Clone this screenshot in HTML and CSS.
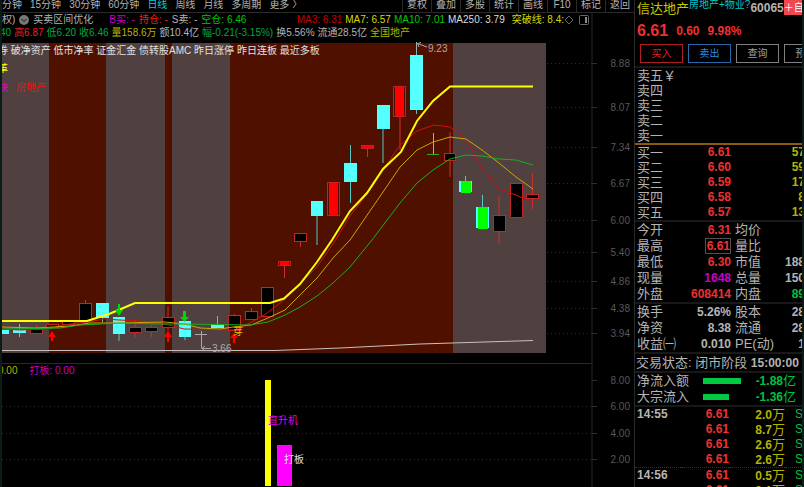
FILE: index.html
```html
<!DOCTYPE html>
<html lang="zh-CN">
  <head>
    <meta charset="UTF-8" />
    <meta name="viewport" content="width=device-width, initial-scale=1.0" />
    <title>信达地产 日线</title>
    <link rel="stylesheet" href="styles.css">
  </head>
  <body>
    <main class="charts">
      <nav class="toolbar">
        <div class="periods">
          <button>分钟</button>
          <button>15分钟</button>
          <button>30分钟</button>
          <button>60分钟</button>
          <button class="active">日线</button>
          <button>周线</button>
          <button>月线</button>
          <button>多周期</button>
          <button>更多 〉</button>
        </div>
        <div class="tools">
          <button>复权</button>
          <button>叠加</button>
          <button>多股</button>
          <button>统计</button>
          <button>画线</button>
          <button>F10</button>
          <button>标记</button>
          <button>返回</button>
        </div>
      </nav>

      <header class="info">
        <div class="line">
          <span>权)</span>
          <svg class="icon" viewBox="0 0 10 10">
            <circle cx="5" cy="5" r="5" fill="#777" />
            <path d="M2.5 4 L5 6.5 L7.5 4" fill="none" stroke="#111" />
          </svg>
          <span class="title">买卖区间优化</span>
          <span class="magenta">B买: -</span>
          <span class="red">持仓: -</span>
          <span>S卖: -</span>
          <span class="lime">空仓: 6.46</span>
          <div class="averages">
            <span class="darkred">MA3: 6.31</span>
            <span class="yellow">MA7: 6.57</span>
            <span class="lime">MA10: 7.01</span>
            <span class="white">MA250: 3.79</span>
            <span class="yellow last">突破线: 8.4:</span>
          </div>
          <svg class="icon" viewBox="0 0 10 10">
            <path d="M5 1 L9 5 L5 9 L1 5 Z" fill="none" stroke="#666" />
          </svg>
          <svg class="icon" viewBox="0 0 10 10">
            <rect x="0.5" y="0.5" width="9" height="9" rx="1" fill="none" stroke="#666" />
            <rect x="6" y="2" width="2" height="6" fill="#888" />
          </svg>
        </div>
        <div class="line quote">
          <span class="green">40</span>
          <span class="red">高6.87</span>
          <span class="green">低6.20</span>
          <span class="green">收6.46</span>
          <span class="gold">量158.6万</span>
          <span>额10.4亿</span>
          <span class="green">幅-0.21(-3.15%)</span>
          <span>换5.56%</span>
          <span>流通28.5亿</span>
          <span class="gold">全国地产</span>
        </div>
      </header>

      <!-- Daily candles -->
      <svg class="chart" viewBox="2 40 632 323">
        <g class="zone-gray">
          <rect x="2" y="43" width="544" height="310" />
        </g>
        <g class="zone-brown">
          <rect x="49" y="43" width="57" height="310" />
          <rect x="165" y="43" width="7" height="310" />
          <rect x="230" y="43" width="223" height="310" />
        </g>

        <!-- Price axis -->
        <path class="axis" d="M592 40 V363" />
        <path class="grid" d="M547 63.5 H592 M547 107.5 H592 M547 147.5 H592 M547 183.5 H592 M547 220.5 H592 M547 252.5 H592 M547 281.5 H592 M547 308.5 H592 M547 333.5 H592" />
        <path class="tick" d="M592 63.5 H597 M592 107.5 H597 M592 147.5 H597 M592 183.5 H597 M592 220.5 H597 M592 252.5 H597 M592 281.5 H597 M592 308.5 H597 M592 333.5 H597" />
        <g class="scale">
          <text x="630" y="67">8.88</text>
          <text x="630" y="111">8.07</text>
          <text x="630" y="151">7.34</text>
          <text x="630" y="187">6.67</text>
          <text x="630" y="224">6.00</text>
          <text x="630" y="256">5.40</text>
          <text x="630" y="285">4.86</text>
          <text x="630" y="312">4.38</text>
          <text x="630" y="337">3.94</text>
        </g>

        <!-- Wicks -->
        <path class="wick-up" d="M36.500 325 V330 M85.500 300 V303 M135 320 V338 M151.500 325 V337 M168 306 V331 M234.500 314 V316 M251.500 308 V312 M284.500 266 V278 M300.500 240 V247 M367.500 149 V157 M400 117 V150 M450 132 V177 M499 196 V244 M532.500 173 V209" />
        <path class="wick-down" d="M19.500 324 V337 M102.500 318 V322 M119 317 V341 M185 321 V340 M217.500 316 V325 M317 215 V245 M350.500 145 V203 M383 129 V163 M416.500 42 V114 M482.500 195 V208 M465.500 176 V182" />
        <path class="wick-flat" d="M433.500 133 V154 M195 334.500 H207 M201.500 331 V348 M201.500 348.500 H211 M205 346 L202 348.500 L205 351 M416.500 43 V52 M427 47 L417.500 43.500 M421 42.500 L417.500 43.500 L419 47" />
        <path class="wick-green" d="M427 154.500 H439" />

        <g class="candle-hollow">
          <rect x="30.500" y="329.500" width="12" height="4" />
          <rect x="46.500" y="324.500" width="12" height="3" />
          <rect x="62.500" y="321.500" width="12" height="3" />
          <rect x="79.500" y="303.500" width="12" height="17" />
          <rect x="129.500" y="327.500" width="12" height="5" />
          <rect x="145.500" y="327.500" width="12" height="4" />
          <rect x="162.500" y="317.500" width="12" height="10" />
          <rect x="228.500" y="315.500" width="12" height="15" />
          <rect x="245.500" y="311.500" width="12" height="8" />
          <rect x="261.500" y="287.500" width="12" height="29" />
          <rect x="294.500" y="233.500" width="12" height="8" />
          <rect x="444.500" y="153.500" width="11" height="7" />
          <rect x="493.500" y="215.500" width="12" height="16" />
          <rect x="510.500" y="183.500" width="12" height="34" />
          <rect x="526.500" y="194.500" width="12" height="4" />
        </g>
        <g class="candle-limit">
          <rect x="278.500" y="261.500" width="12" height="4" />
          <rect x="327.500" y="182.500" width="12" height="33" />
          <rect x="361.500" y="145.500" width="12" height="3" />
          <rect x="393.500" y="86.500" width="12" height="30" />
        </g>
        <path class="candle-edge" d="M279.500 262 V265 M289.500 262 V265 M328.500 183 V215 M338.500 183 V215 M394.500 87 V116 M404.500 87 V116" />
        <g class="candle-down">
          <rect x="2" y="330" width="7" height="4" />
          <rect x="13" y="330" width="13" height="3" />
          <rect x="96" y="303" width="13" height="15" />
          <rect x="113" y="317" width="12" height="17" />
          <rect x="179" y="321" width="12" height="16" />
          <rect x="211" y="324" width="13" height="4" />
          <rect x="311" y="201" width="12" height="15" />
          <rect x="344" y="163" width="13" height="19" />
          <rect x="377" y="105" width="13" height="24" />
          <rect x="410" y="55" width="13" height="55" />
          <rect x="459" y="181" width="13" height="11" />
          <rect x="476" y="207" width="13" height="21" />
        </g>
        <g class="candle-sell">
          <rect x="461" y="181" width="10" height="12" />
          <rect x="478" y="207" width="10" height="22" />
        </g>

        <!-- Averages -->
        <polyline class="ma250" points="2,350.500 275,350.500 340,348 420,344 533,340.500" />
        <polyline class="ma3" points="2,329 20,330 50,329 62,325 87,322 105,319 119,320 140,321 165,324 184,329 235,330 250,323 267,313 284,300 300,284 317,267 335,241 350,216 367,194 385,167 400,145 417,131 434,125 450,127 466,139 482,168 499,189 516,195 533,203" />
        <polyline class="ma7" points="2,327 35,328 70,326 90,323 120,323 165,322 184,324 200,328 220,329 233,327 251,325 268,318 285,310 300,295 317,278 333,258 350,240 383,192 400,167 417,150 433,142 450,137 466,139 482,150 499,163 516,177 533,189" />
        <polyline class="ma10" points="2,329 60,328 80,325 100,324 120,323 160,324 184,324 250,325 268,322 285,315 300,307 317,296 333,283 350,267 372,240 400,203 417,183 433,170 450,159 466,155 482,156 499,159 516,160 533,165" />
        <polyline class="breakout" points="2,321 87,321 109,314 135,303 270,303 284,298.500 300,284 317,262 332,240 350,211 367,193 383,169 401,152 417,121 433,101 450,86.500 533,86.500" />

        <g class="arrow-buy">
          <path d="M52 331 L56 337 H53 V341 H51 V337 H48 Z" />
          <path d="M168 331 L172 337 H169 V342 H167 V337 H164 Z" />
          <path d="M234 333 L238 338 H235 V343 H233 V338 H230 Z" />
        </g>
        <g class="arrow-sell">
          <path d="M119 316 L123 310 H120 V304 H118 V310 H115 Z" />
          <path d="M184.500 322 L189 317 H186 V311 H183 V317 H180 Z" />
        </g>

        <g class="note">
          <text class="white" x="-2" y="54">券 破净资产 低市净率 证金汇金 债转股AMC 昨日涨停 昨日连板 最近多板</text>
          <text class="bright" x="-2" y="72">革</text>
          <text class="magenta" x="-2" y="91">块</text>
          <text class="red" x="16" y="91">房地产</text>
          <text class="gold" x="233" y="335">芽</text>
          <text x="212" y="352">3.66</text>
          <text x="428" y="52">9.23</text>
        </g>
      </svg>

      <div class="line sub-legend">
        <span class="gold">0.00</span>
        <span class="magenta">打板: 0.00</span>
      </div>

      <!-- Indicator panel -->
      <svg class="chart" viewBox="2 378 632 109">
        <path class="grid" d="M2 406.500 H592 M2 433.500 H592 M2 459.500 H592" />
        <path class="axis" d="M592 378 V487" />
        <path class="tick" d="M592 380.500 H597 M592 406.500 H597 M592 433.500 H597 M592 459.500 H597" />
        <g class="scale">
          <text x="630" y="384">8.00</text>
          <text x="630" y="410">6.00</text>
          <text x="630" y="437">4.00</text>
          <text x="630" y="463">2.00</text>
        </g>
        <rect class="bar-yellow" x="265" y="380" width="6" height="106" />
        <rect class="bar-magenta" x="277" y="445" width="15" height="41" />
        <g class="note">
          <text class="magenta" x="268" y="424">直升机</text>
          <text class="white" x="284" y="463">打板</text>
        </g>
      </svg>
    </main>

    <aside class="panel">
      <header class="stock">
        <h1>信达地产</h1>
        <a class="sector" href="#">房地产+物业?</a>
        <b>60065</b>
        <button>＋自选</button>
      </header>
      <div class="price">
        <strong>6.61</strong>
        <b>0.60</b>
        <b>9.98%</b>
      </div>
      <div class="actions">
        <button class="buy">买入</button>
        <button class="sell">卖出</button>
        <button>查询</button>
        <button>预警</button>
      </div>

      <table class="book asks">
        <tr><th>卖五￥</th><td></td><td></td></tr>
        <tr><th>卖四</th><td></td><td></td></tr>
        <tr><th>卖三</th><td></td><td></td></tr>
        <tr><th>卖二</th><td></td><td></td></tr>
        <tr><th>卖一</th><td></td><td></td></tr>
      </table>
      <table class="book bids">
        <tr><th>买一</th><td class="up">6.61</td><td class="gold">57</td></tr>
        <tr><th>买二</th><td class="up">6.60</td><td class="gold">59</td></tr>
        <tr><th>买三</th><td class="up">6.59</td><td class="gold">17</td></tr>
        <tr><th>买四</th><td class="up">6.58</td><td class="gold">8</td></tr>
        <tr><th>买五</th><td class="up">6.57</td><td class="gold">13</td></tr>
      </table>

      <table class="stats">
        <tr><th>今开</th><td class="up">6.31</td><th>均价</th><td></td></tr>
        <tr><th>最高</th><td class="up"><span class="boxed">6.61</span></td><th>量比</th><td></td></tr>
        <tr><th>最低</th><td class="up">6.30</td><th>市值</th><td>188</td></tr>
        <tr><th>现量</th><td class="magenta">1648</td><th>总量</th><td>150</td></tr>
        <tr><th>外盘</th><td class="up">608414</td><th>内盘</th><td class="down">89</td></tr>
      </table>
      <table class="stats">
        <tr><th>换手</th><td>5.26%</td><th>股本</th><td>28</td></tr>
        <tr><th>净资</th><td>8.38</td><th>流通</th><td>28</td></tr>
        <tr><th>收益㈠</th><td>0.010</td><th>PE(动)</th><td>1</td></tr>
      </table>

      <p class="status">交易状态: 闭市阶段 <b>15:00:00</b></p>

      <table class="flow">
        <tr><th>净流入额</th><td><div class="flow-bar" style="width: 38px"></div></td><td class="down"><b>-1.88</b>亿</td></tr>
        <tr><th>大宗流入</th><td><div class="flow-bar" style="width: 26px"></div></td><td class="down"><b>-1.36</b>亿</td></tr>
      </table>

      <table class="ticks">
        <tr><th>14:55</th><td class="up">6.61</td><td class="gold"><b>2.0</b>万</td><td class="down">S</td></tr>
        <tr><th></th><td class="up">6.61</td><td class="gold"><b>8.7</b>万</td><td class="down">S</td></tr>
        <tr><th></th><td class="up">6.61</td><td class="gold"><b>2.6</b>万</td><td class="down">S</td></tr>
        <tr><th></th><td class="up">6.61</td><td class="gold"><b>2.6</b>万</td><td class="down">S</td></tr>
        <tr class="minute"><th>14:56</th><td class="up">6.61</td><td class="gold"><b>0.5</b>万</td><td class="down">S</td></tr>
        <tr><th></th><td class="up">6.61</td><td class="gold"><b>2.1</b>万</td><td class="down">S</td></tr>
      </table>
    </aside>
  </body>
</html>
```

FILE: styles.css
```css
* {
  box-sizing: border-box;
}
body {
  margin: 0;
  height: 100vh;
  overflow: hidden;
  display: grid;
  grid-template-columns: minmax(0, 1fr) 168px;
  background-color: #000;
  color: #b4b4b4;
  border-left: 2px solid #0c1c1a;
  border-right: 2px solid #0c1c1a;
  font-family: "Liberation Sans", "Noto Sans CJK SC", sans-serif;
  font-size: 10px;
}
button {
  padding: 0;
  border: none;
  background: none;
  color: inherit;
  font: inherit;
  white-space: nowrap;
  cursor: pointer;
}
.charts {
  min-width: 0;
  overflow: hidden;
}

/* Text colours */
.red {
  color: #ee2020;
  fill: #ee1010;
}
.darkred {
  color: #c80000;
}
.yellow {
  color: #d8d800;
}
.gold {
  color: #b4b400;
  fill: #d0c000;
}
.bright {
  fill: #ffff00;
}
.lime {
  color: #00c800;
}
.green {
  color: #00a840;
}
.magenta {
  color: #c800c8;
  fill: #e000e0;
}
.white {
  color: #dcdcdc;
  fill: #e0e0e0;
}

/* Top bar */
.toolbar {
  display: flex;
  justify-content: space-between;
  height: 13px;
  border-bottom: 1px solid #2a2a2a;
  line-height: 10px;
  overflow: hidden;
}
.periods {
  display: flex;
  align-items: flex-start;
  gap: 8px;
}
.periods .active {
  color: #00d0d8;
}
.tools {
  display: flex;
  width: 232px;
}
.tools button {
  flex: 1;
  border-left: 1px solid #2a2a2a;
  padding-bottom: 2px;
}

/* Quote lines */
.info {
  height: 27px;
  margin-right: 41px;
  border-right: 2px solid #141414;
}
.line {
  display: flex;
  align-items: center;
  gap: 4px;
  height: 14px;
  line-height: 14px;
  white-space: nowrap;
}
.quote {
  gap: 3px;
  height: 12px;
  line-height: 12px;
  margin-left: -2px;
}
.icon {
  flex: none;
  width: 10px;
  height: 10px;
}
.title {
  margin-right: 12px;
}
.averages {
  display: flex;
  gap: 3px;
  flex: 1;
  justify-content: flex-end;
  margin-right: -4px;
}
.last {
  margin-left: 4px;
}
.info .icon:last-child {
  margin: 0 2px 0 1px;
}

/* Charts */
.chart {
  display: block;
  width: 100%;
  height: auto;
  overflow: visible;
}
.zone-gray {
  fill: #504040;
}
.zone-brown {
  fill: #501000;
}
.axis {
  stroke: #141414;
  stroke-width: 2;
}
.grid {
  stroke: #2c2c2c;
  stroke-dasharray: 1 3;
}
.tick {
  stroke: #303030;
}
.scale {
  fill: #585858;
  text-anchor: end;
}
.note {
  fill: #b0a8a8;
}
.wick-up,
.wick-down,
.wick-flat,
.wick-green {
  fill: none;
}
.wick-up {
  stroke: #c83030;
}
.wick-down {
  stroke: #50c8c8;
}
.wick-flat {
  stroke: #b0a8a8;
}
.wick-green {
  stroke: #30b010;
}
.candle-hollow {
  fill: #000;
  stroke: #c02828;
}
.candle-limit {
  fill: #ff0000;
  stroke: #c82020;
}
.candle-edge {
  stroke: #500808;
}
.candle-down {
  fill: #54ffff;
}
.candle-sell {
  fill: #00ff00;
}
polyline {
  fill: none;
}
.ma250 {
  stroke: #c8c0c0;
}
.ma3 {
  stroke: #d01010;
}
.ma7 {
  stroke: #c8a800;
}
.ma10 {
  stroke: #18b018;
}
.breakout {
  stroke: #ffff00;
  stroke-width: 2;
}
.arrow-buy {
  fill: #ff0000;
}
.arrow-sell {
  fill: #00d800;
}
.sub-legend {
  height: 15px;
  margin-right: 41px;
  border-top: 1px solid #2a2a2a;
  border-right: 2px solid #141414;
  gap: 12px;
  margin-left: -4px;
}
.bar-yellow {
  fill: #ffff00;
}
.bar-magenta {
  fill: #ff00ff;
}

/* Quote panel */
.panel {
  min-width: 0;
  overflow: hidden;
  border-left: 1px solid #2a2a2a;
  font-size: 13px;
}
.stock {
  display: flex;
  align-items: flex-start;
  height: 20px;
  padding-left: 2px;
  line-height: 17px;
  white-space: nowrap;
}
.stock > * {
  flex: none;
}
.stock h1 {
  margin: 0;
  color: #c8c800;
  font-size: 13px;
  font-weight: normal;
}
.sector {
  color: #00c8c8;
  font-size: 10px;
  line-height: 10px;
  text-decoration: none;
}
.stock b {
  font-size: 12px;
}
.stock button {
  height: 15px;
  background-color: #f04850;
  color: #fff;
  font-size: 10px;
  line-height: 15px;
}
.price {
  display: flex;
  align-items: center;
  gap: 8px;
  height: 22px;
  padding-left: 2px;
  color: #f03030;
  font-size: 12px;
}
.price strong {
  font-size: 16px;
}
.actions {
  display: flex;
  gap: 5px;
  height: 26px;
  padding: 2px 0 0 5px;
  border-bottom: 2px solid #181818;
}
.actions button {
  flex: none;
  width: 43px;
  height: 19px;
  border: 1px solid #808080;
  color: #a0a0a0;
  font-size: 10px;
  line-height: 16px;
}
.actions .buy {
  border-color: #b02020;
  color: #e02020;
}
.actions .sell {
  border-color: #2868a8;
  color: #3088d8;
}

table {
  width: 170px;
  table-layout: fixed;
  border-spacing: 0;
  white-space: nowrap;
}
th,
td {
  height: 15px;
  padding: 0;
  line-height: 15px;
  vertical-align: top;
}
th {
  padding-left: 2px;
  font-weight: normal;
  text-align: left;
}
td {
  font-size: 12px;
  font-weight: bold;
  text-align: right;
}
.up {
  color: #f03030;
}
.down {
  color: #00c040;
}
.book th {
  width: 46px;
}
.book td:nth-child(2) {
  width: 50px;
}
.asks {
  border-bottom: 2px solid #8a5a10;
}
.bids {
  border-bottom: 2px solid #181818;
}
.stats {
  border-bottom: 2px solid #181818;
}
.stats th,
.stats td {
  height: 16px;
  line-height: 16px;
}
.stats th:first-child {
  width: 40px;
}
.stats td:nth-child(2) {
  width: 56px;
}
.stats th:nth-child(3) {
  width: 46px;
  padding-left: 4px;
}
.boxed {
  display: block;
  width: 26px;
  height: 16px;
  margin-left: auto;
  line-height: 14px;
  border: 1px solid #505050;
}
.status {
  margin: 0;
  height: 19px;
  padding-left: 1px;
  border-bottom: 2px solid #181818;
  line-height: 17px;
  white-space: nowrap;
}
.status b {
  font-size: 12px;
}
.flow {
  border-bottom: 2px solid #181818;
}
.flow th,
.flow td {
  height: 16px;
  line-height: 16px;
}
.flow th {
  width: 68px;
}
.flow td:nth-child(2) {
  width: 40px;
  vertical-align: middle;
}
.flow td:last-child {
  padding-right: 9px;
  font-size: 13px;
  font-weight: normal;
}
.flow b,
.ticks b {
  font-size: 12px;
  line-height: 12px;
}
.flow-bar {
  height: 6px;
  background-color: #00c840;
}
.ticks th {
  width: 46px;
  font-size: 12px;
  font-weight: bold;
}
.ticks td:nth-child(2) {
  width: 48px;
}
.ticks td:nth-child(3) {
  width: 56px;
  font-size: 13px;
  font-weight: normal;
}
.ticks td:last-child {
  padding-left: 10px;
  font-weight: normal;
  text-align: left;
}
.ticks .minute > * {
  border-top: 1px dotted #303030;
}
```
